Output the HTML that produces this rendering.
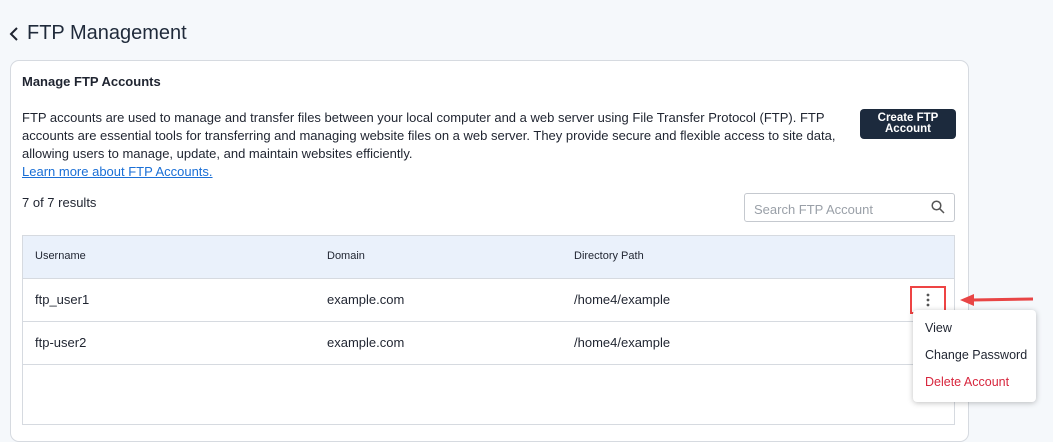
<!DOCTYPE html>
<html><head><style>
body{margin:0;width:1053px;height:408px;background:#f5f8fb;font-family:"Liberation Sans",sans-serif;color:#1f2430;position:relative;overflow:hidden}
.abs{position:absolute}
.card{left:10px;top:60px;width:957px;height:380px;background:#fff;border:1px solid #d6dae0;border-radius:9px}
.t{font-size:13px}
</style></head><body>
<svg class="abs" style="left:8px;top:26px" width="12" height="16"><path d="M9 2 L3 8 L9 14" fill="none" stroke="#1f2430" stroke-width="2"/></svg>
<div class="abs" style="left:27px;top:22px;font-size:20px;color:#1f2a3a">FTP Management</div>
<div class="abs card"></div>
<div class="abs" style="left:22px;top:74px;font-size:13px;font-weight:bold">Manage FTP Accounts</div>
<div class="abs t" style="left:22px;top:109px;width:850px;line-height:18px">FTP accounts are used to manage and transfer files between your local computer and a web server using File Transfer Protocol (FTP). FTP accounts are essential tools for transferring and managing website files on a web server. They provide secure and flexible access to site data, allowing users to manage, update, and maintain websites efficiently.<br><span style="color:#1a6fd6;text-decoration:underline">Learn more about FTP Accounts.</span></div>
<div class="abs" style="left:860px;top:109px;width:96px;height:30px;background:#1c2a3d;border-radius:4px;color:#fff;font-size:11.5px;font-weight:bold;text-align:center;line-height:11px;padding-top:4px;box-sizing:border-box">Create FTP<br>Account</div>
<div class="abs t" style="left:22px;top:195px">7 of 7 results</div>
<div class="abs" style="left:744px;top:193px;width:211px;height:29px;border:1px solid #c5c9cf;border-radius:3px;box-sizing:border-box"></div>
<div class="abs t" style="left:754px;top:202px;color:#9aa0a8">Search FTP Account</div>
<svg class="abs" style="left:931px;top:200px" width="14" height="14"><circle cx="5.5" cy="5.5" r="4.3" fill="none" stroke="#555" stroke-width="1.5"/><path d="M8.7 8.7 L13 13" stroke="#555" stroke-width="1.5"/></svg>
<div class="abs" style="left:22px;top:235px;width:933px;height:190px;border:1px solid #d6dae0;box-sizing:border-box"></div>
<div class="abs" style="left:23px;top:236px;width:931px;height:42px;background:#eaf1fb;border-bottom:1px solid #d6dae0"></div>
<div class="abs" style="left:23px;top:321px;width:931px;height:1px;background:#d6dae0"></div>
<div class="abs" style="left:23px;top:364px;width:931px;height:1px;background:#d6dae0"></div>
<div class="abs" style="left:35px;top:250px;font-size:11px">Username</div>
<div class="abs" style="left:327px;top:250px;font-size:11px">Domain</div>
<div class="abs" style="left:574px;top:250px;font-size:11px">Directory Path</div>
<div class="abs t" style="left:35px;top:292px">ftp_user1</div>
<div class="abs t" style="left:327px;top:292px">example.com</div>
<div class="abs t" style="left:574px;top:292px">/home4/example</div>
<div class="abs t" style="left:35px;top:335px">ftp-user2</div>
<div class="abs t" style="left:327px;top:335px">example.com</div>
<div class="abs t" style="left:574px;top:335px">/home4/example</div>
<div class="abs" style="left:910px;top:286px;width:36px;height:28px;border:2px solid #ee4444;box-sizing:border-box"></div>
<svg class="abs" style="left:925px;top:292px" width="6" height="16"><circle cx="3" cy="3" r="1.4" fill="#555"/><circle cx="3" cy="8" r="1.4" fill="#555"/><circle cx="3" cy="13" r="1.4" fill="#555"/></svg>
<svg class="abs" style="left:958px;top:290px" width="78" height="20"><path d="M14 10 L75 9" stroke="#e84545" stroke-width="3"/><path d="M2 10 L16 4 L16 16 Z" fill="#e84545"/></svg>
<div class="abs" style="left:913px;top:310px;width:123px;height:92px;background:#fff;border-radius:4px;box-shadow:0 1px 6px rgba(0,0,0,.25)"></div>
<div class="abs" style="left:925px;top:321px;font-size:12.5px">View</div>
<div class="abs" style="left:925px;top:348px;font-size:12.5px">Change Password</div>
<div class="abs" style="left:925px;top:375px;font-size:12.5px;color:#d7263d">Delete Account</div>
</body></html>
